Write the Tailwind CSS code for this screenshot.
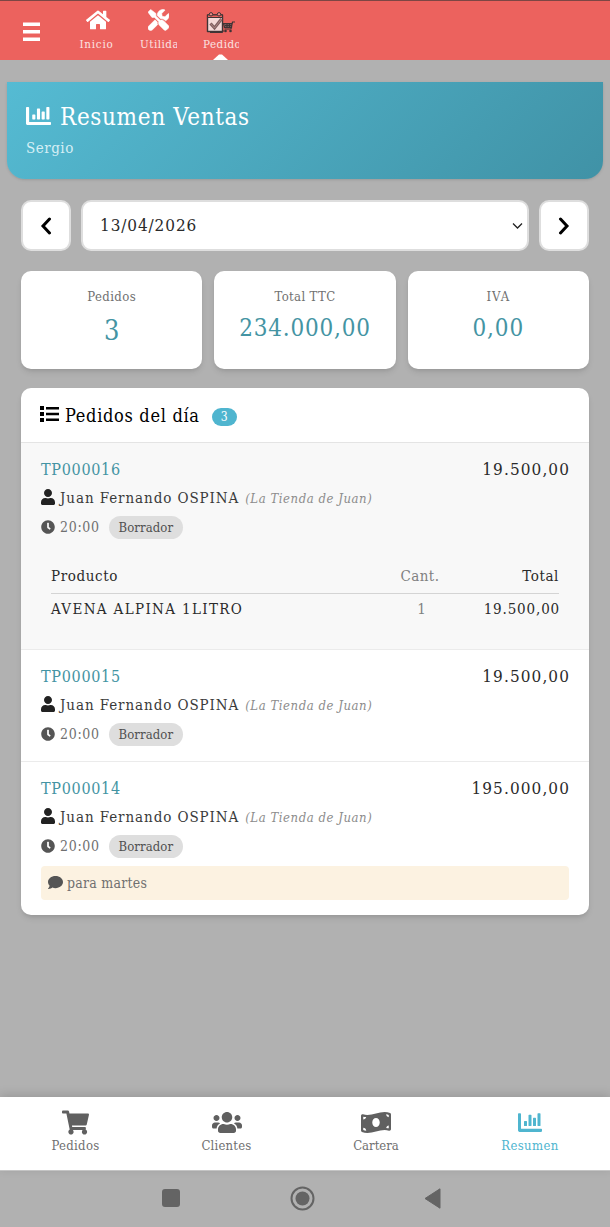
<!DOCTYPE html>
<html lang="es">
<head>
    <meta charset="UTF-8">
    <meta name="viewport" content="width=device-width, initial-scale=1.0">
    <title>Resumen Ventas</title>
    <!-- Tailwind CSS CDN for styling -->
    <script src="https://cdn.jsdelivr.net/npm/@tailwindcss/browser@4"></script>
</head>
<body class="bg-[#b1b1b1] font-['DejaVu_Serif_Condensed','DejaVu_Serif',serif] text-[#2a2a2a]">
    <!-- Shared icon shapes -->
    <svg class="hidden" xmlns="http://www.w3.org/2000/svg">
        <symbol id="chart" viewBox="0 0 512 512" preserveAspectRatio="none"><path d="M332.8 330h38.4c6.4 0 12.8-6.4 12.8-12.8V172.8c0-6.4-6.4-12.8-12.8-12.8h-38.4c-6.4 0-12.8 6.4-12.8 12.8v144.4c0 6.4 6.4 12.8 12.8 12.8zm96 0h38.4c6.4 0 12.8-6.4 12.8-12.8V76.8c0-6.4-6.4-12.8-12.8-12.8h-38.4c-6.4 0-12.8 6.4-12.8 12.8v240.4c0 6.4 6.4 12.8 12.8 12.8zm-288 0h38.4c6.4 0 12.8-6.4 12.8-12.8v-80.4c0-6.4-6.4-12.8-12.8-12.8h-38.4c-6.4 0-12.8 6.4-12.8 12.8v80.4c0 6.4 6.4 12.8 12.8 12.8zm96 0h38.4c6.4 0 12.8-6.4 12.8-12.8V108.8c0-6.4-6.4-12.8-12.8-12.8h-38.4c-6.4 0-12.8 6.4-12.8 12.8v208.400c0 6.4 6.4 12.8 12.8 12.8zM496 384H64V80c0-8.84-7.16-16-16-16H16C7.16 64 0 71.16 0 80v336c0 17.67 14.33 32 32 32h464c8.84 0 16-7.16 16-16v-32c0-8.84-7.16-16-16-16z"/></symbol>
        <symbol id="user" viewBox="0 0 448 512"><path d="M224 256c70.7 0 128-57.3 128-128S294.7 0 224 0 96 57.3 96 128s57.3 128 128 128zm89.6 32h-16.7c-22.2 10.2-46.9 16-72.9 16s-50.6-5.8-72.9-16h-16.7C60.2 288 0 348.2 0 422.4V464c0 26.5 21.5 48 48 48h352c26.5 0 48-21.5 48-48v-41.6c0-74.2-60.2-134.4-134.4-134.4z"/></symbol>
        <symbol id="clock" viewBox="0 0 512 512"><path d="M256,8C119,8,8,119,8,256S119,504,256,504,504,393,504,256,393,8,256,8Zm92.49,313h0l-20,25a16,16,0,0,1-22.49,2.5h0l-67-49.72a40,40,0,0,1-15-31.23V112a16,16,0,0,1,16-16h32a16,16,0,0,1,16,16V256l58,42.5A16,16,0,0,1,348.49,321Z"/></symbol>
    </svg>

    <div class="flex h-[1227px] w-[610px] flex-col overflow-hidden">
        <!-- Top bar -->
        <header class="flex h-[60px] shrink-0 border-t border-[#7d4644] bg-[#ec625e] text-[11.5px] leading-4 tracking-[0.5px] text-[#fbe3e2]">
            <div class="w-[77px] pt-[21px] pl-[23px]">
                <svg class="h-[20px] w-[17px] fill-white" viewBox="0 0 17 20"><path d="M0 .5h17V4H0zM0 8h17v3.5H0zM0 15.500h17V19H0z"/></svg>
            </div>
            <div class="flex w-[41px] flex-col items-center pt-2">
                <svg class="h-[22px] w-[24px] fill-white" viewBox="0 0 576 512"><path d="M280.37 148.26L96 300.11V464a16 16 0 0 0 16 16l112.06-.29a16 16 0 0 0 15.92-16V368a16 16 0 0 1 16-16h64a16 16 0 0 1 16 16v95.64a16 16 0 0 0 16 16.050L464 480a16 16 0 0 0 16-16V300L295.67 148.26a12.19 12.19 0 0 0-15.3 0zM571.6 251.47L488 182.56V44.050a12 12 0 0 0-12-12h-56a12 12 0 0 0-12 12v72.61L318.47 43a48 48 0 0 0-61 0L4.340 251.47a12 12 0 0 0-1.6 16.9l25.5 31A12 12 0 0 0 45.150 301l235.22-193.74a12.19 12.19 0 0 1 15.3 0L530.9 301a12 12 0 0 0 16.9-1.6l25.5-31a12 12 0 0 0-1.7-16.930z"/></svg>
                <span class="mt-[5px] mr-[2px] tracking-[0.8px]">Inicio</span>
            </div>
            <div class="ml-[22px] flex w-[37px] flex-col pt-2">
                <svg class="ml-[8px] h-[22px] w-[21px] fill-white" viewBox="0 0 512 512"><path d="M501.1 395.7L384 278.6c-23.1-23.1-57.6-27.6-85.4-13.9L192 158.1V96L64 0 0 64l96 128h62.1l106.6 106.6c-13.6 27.8-9.2 62.3 13.9 85.4l117.1 117.1c14.6 14.6 38.2 14.6 52.7 0l52.7-52.7c14.5-14.6 14.5-38.2 0-52.7zM331.7 225c28.3 0 54.9 11 74.9 31l19.4 19.4c15.8-6.9 30.8-16.5 43.8-29.5 37.1-37.1 49.7-89.3 37.9-136.7-2.2-9-13.5-12.1-20.1-5.5l-74.4 74.4-67.9-11.3L334 98.9l74.4-74.4c6.6-6.6 3.4-17.9-5.7-20.2-47.4-11.7-99.6.9-136.6 37.9-28.5 28.5-41.9 66.1-41.2 103.6l82.1 82.1c8.1-1.9 16.5-2.9 24.7-2.9zm-103.900 82l-56.700-56.700L18.700 402.800c-25 25-25 65.500 0 90.500s65.500 25 90.500 0l123.600-123.600c-7.600-19.900-9.900-41.600-5-62.700z" stroke="#fff" stroke-width="14"/></svg>
                <span class="mt-[5px] overflow-hidden whitespace-nowrap">Utilidades</span>
            </div>
            <div class="ml-[26px] flex w-[36px] flex-col pt-[11px]">
                <svg class="ml-[3px] h-[22px] w-[30px]" viewBox="0 0 30 22" fill="none">
                    <path d="M1.500 3h15v16.500h-15z" fill="#f4d8d7" stroke="#3f3435" stroke-width="1.400" stroke-linejoin="round"/>
                    <path d="M1.500 5.500V3h15v2.500z" fill="#ec625e" stroke="#3f3435"/>
                    <path d="M4 20.500h12.500l1-2" stroke="#3f3435"/>
                    <circle cx="5" cy="2.300" r="1.700" fill="#ec8a87" stroke="#3f3435"/>
                    <circle cx="13" cy="2.300" r="1.700" fill="#ec8a87" stroke="#3f3435"/>
                    <path d="M4.500 11.500l4 4.500L15.500 7" stroke="#7e5f60" stroke-width="3"/>
                    <path d="M4.500 11.500l4 4.500L15.500 7" stroke="#b08382" stroke-width="1"/>
                    <path d="M18 11.500h8l-1 4.500h-6z" fill="#7a5a5b"/>
                    <path d="M29 10h-2.500l-1.500 7h-6.500M26 11.500h-8.500l1 4h7zM19 13.500h6.500M21 11.500v4M23.500 11.500v4" stroke="#3f3435" stroke-width="1.200"/>
                    <circle cx="19.500" cy="19" r="1.300" fill="#3f3435"/><circle cx="24.500" cy="19" r="1.300" fill="#3f3435"/>
                </svg>
                <span class="mt-[2px] overflow-hidden whitespace-nowrap">Pedidos</span>
                <svg class="mt-[2px] ml-[10px] h-[6px] w-[15px] fill-white" viewBox="0 0 15 6"><path d="M0 6L6 .5h3L15 6z"/></svg>
            </div>
        </header>

        <!-- Title banner -->
        <section class="mx-[7px] mt-[22px] h-[97px] shrink-0 rounded-b-[18px] bg-linear-135 from-[#55bbd3] to-[#4092a6] px-5 pt-[19px] text-white shadow-sm">
            <h1 class="flex h-8 items-center text-[24px] tracking-[0.65px]">
                <svg class="mb-[3px] mr-[9px] ml-[-1px] h-[24px] w-[25px] fill-white"><use href="#chart"/></svg>Resumen Ventas
            </h1>
            <p class="mt-[5px] ml-[-1px] text-[15px] leading-5 tracking-[0.5px] text-[#d5eff5]">Sergio</p>
        </section>

        <!-- Date picker -->
        <div class="mx-[21px] mt-[21px] flex h-[51px] shrink-0 gap-[10px]">
            <div class="flex w-[50px] items-center justify-center rounded-[10px] border-2 border-[#dedede] bg-white">
                <svg class="h-[18px] w-[12px]" viewBox="0 0 12 18" fill="none"><path d="M9.500 2L3 9l6.500 7" stroke="#000" stroke-width="3" stroke-linecap="round"/></svg>
            </div>
            <div class="flex flex-1 items-center justify-between rounded-[10px] border-2 border-[#dedede] bg-white pr-1 pl-[17px] text-[17px]">
                <span class="tracking-[0.9px]">13/04/2026</span>
                <svg class="h-[8px] w-[11px]" viewBox="0 0 11 8" fill="none"><path d="M1 1.500l4.500 4.500L10 1.500" stroke="#222" stroke-width="1.300"/></svg>
            </div>
            <div class="flex w-[50px] items-center justify-center rounded-[10px] border-2 border-[#dedede] bg-white">
                <svg class="h-[18px] w-[12px]" viewBox="0 0 12 18" fill="none"><path d="M2.500 2L9 9l-6.500 7" stroke="#000" stroke-width="3" stroke-linecap="round"/></svg>
            </div>
        </div>

        <!-- Totals -->
        <div class="mx-[21px] mt-[20px] grid h-[98px] shrink-0 grid-cols-3 gap-[12px] text-center">
            <div class="rounded-[10px] bg-white pt-4 shadow-md">
                <p class="text-[13px] leading-5 tracking-[0.4px] text-[#707070]">Pedidos</p>
                <p class="mt-[6px] text-[27px] leading-9 text-[#4494a3]">3</p>
            </div>
            <div class="rounded-[10px] bg-white pt-4 shadow-md">
                <p class="text-[13px] leading-5 tracking-[0.35px] text-[#707070]">Total TTC</p>
                <p class="mt-[3px] text-[24px] leading-9 tracking-[0.8px] text-[#4494a3]">234.000,00</p>
            </div>
            <div class="rounded-[10px] bg-white pt-4 shadow-md">
                <p class="text-[13px] leading-5 tracking-[1px] text-[#707070]">IVA</p>
                <p class="mt-[3px] text-[24px] leading-9 tracking-[0.9px] text-[#4494a3]">0,00</p>
            </div>
        </div>

        <!-- Orders of the day -->
        <section class="mx-[21px] mt-[19px] h-[527px] shrink-0 overflow-hidden rounded-[10px] bg-white shadow-md">
            <div class="flex h-[55px] items-center border-b border-[#e4e4e4] pl-[19px] text-[18px] text-black">
                <svg class="mb-[3px] mr-[6px] h-[16px] w-[19px]" viewBox="0 0 19 16"><path d="M0 0h4v4H0zM0 6h4v4H0zM0 12h4v4H0zM6 1h13v2.400H6zM6 6.800h13v2.400H6zM6 12.600h13V15H6z"/></svg>
                <h2 class="tracking-[0.7px]">Pedidos del día</h2>
                <span class="mt-[3px] ml-[12px] flex h-[18px] w-[25px] items-center justify-center rounded-full bg-[#4fb5cf] text-[12px] text-white">3</span>
            </div>

            <article class="h-[207px] border-b border-[#ebebeb] bg-[#f8f8f8] px-5 pt-[13px]">
                <div class="flex h-7 items-center justify-between text-[16px]"><span class="tracking-[0.7px] text-[#4494a3]">TP000016</span><span class="mr-[-1px] text-[17px] tracking-[1.1px]">19.500,00</span></div>
                <div class="flex h-7 items-center text-[15px]"><svg class="mr-[5px] mb-[2px] h-[16px] w-[14px] fill-[#222]"><use href="#user"/></svg><span class="tracking-[0.92px] text-[#3a3a3a]">Juan Fernando OSPINA</span><i class="mt-px ml-[6px] text-[13px] tracking-[0.55px] text-[#8c8c8c]">(La Tienda de Juan)</i></div>
                <div class="flex h-[31px] items-center text-[14px] text-[#707070]"><svg class="mr-[5px] mb-[2px] h-[14px] w-[14px] fill-[#555]"><use href="#clock"/></svg><span class="tracking-[0.7px]">20:00</span><span class="ml-[9px] flex h-[23px] w-[74px] items-center justify-center rounded-full bg-[#dedede] text-[13px] tracking-[0.1px] text-[#505050]">Borrador</span></div>
                <div class="mx-[10px] mt-[17px] text-[15px]">
                    <div class="flex h-[34px] items-center border-b border-[#d4d4d4]"><span class="flex-1 tracking-[0.6px]">Producto</span><span class="w-[60px] text-center tracking-[0.4px] text-[#808080]">Cant.</span><span class="w-[109px] text-right tracking-[0.6px]">Total</span></div>
                    <div class="flex h-[30px] items-center"><span class="flex-1 tracking-[1.35px]">AVENA ALPINA 1LITRO</span><span class="w-[60px] pl-[3px] text-center text-[#808080]">1</span><span class="mr-[-1px] w-[110px] text-right tracking-[0.85px]">19.500,00</span></div>
                </div>
            </article>

            <article class="h-[112px] border-b border-[#ebebeb] px-5 pt-[13px]">
                <div class="flex h-7 items-center justify-between text-[16px]"><span class="tracking-[0.7px] text-[#4494a3]">TP000015</span><span class="mr-[-1px] text-[17px] tracking-[1.1px]">19.500,00</span></div>
                <div class="flex h-7 items-center text-[15px]"><svg class="mr-[5px] mb-[2px] h-[16px] w-[14px] fill-[#222]"><use href="#user"/></svg><span class="tracking-[0.92px] text-[#3a3a3a]">Juan Fernando OSPINA</span><i class="mt-px ml-[6px] text-[13px] tracking-[0.55px] text-[#8c8c8c]">(La Tienda de Juan)</i></div>
                <div class="flex h-[31px] items-center text-[14px] text-[#707070]"><svg class="mr-[5px] mb-[2px] h-[14px] w-[14px] fill-[#555]"><use href="#clock"/></svg><span class="tracking-[0.7px]">20:00</span><span class="ml-[9px] flex h-[23px] w-[74px] items-center justify-center rounded-full bg-[#dedede] text-[13px] tracking-[0.1px] text-[#505050]">Borrador</span></div>
            </article>

            <article class="px-5 pt-[13px]">
                <div class="flex h-7 items-center justify-between text-[16px]"><span class="tracking-[0.7px] text-[#4494a3]">TP000014</span><span class="mr-[-1px] text-[17px] tracking-[1.1px]">195.000,00</span></div>
                <div class="flex h-7 items-center text-[15px]"><svg class="mr-[5px] mb-[2px] h-[16px] w-[14px] fill-[#222]"><use href="#user"/></svg><span class="tracking-[0.92px] text-[#3a3a3a]">Juan Fernando OSPINA</span><i class="mt-px ml-[6px] text-[13px] tracking-[0.55px] text-[#8c8c8c]">(La Tienda de Juan)</i></div>
                <div class="flex h-[31px] items-center text-[14px] text-[#707070]"><svg class="mr-[5px] mb-[2px] h-[14px] w-[14px] fill-[#555]"><use href="#clock"/></svg><span class="tracking-[0.7px]">20:00</span><span class="ml-[9px] flex h-[23px] w-[74px] items-center justify-center rounded-full bg-[#dedede] text-[13px] tracking-[0.1px] text-[#505050]">Borrador</span></div>
                <div class="mt-1 flex h-[34px] items-center rounded-[4px] bg-[#fcf2e1] pl-[7px] text-[14px] tracking-[0.25px] text-[#707070]">
                    <svg class="mr-[4px] mb-[2px] h-[15px] w-[15px] fill-[#555]" viewBox="0 0 512 512"><path d="M256 32C114.6 32 0 125.1 0 240c0 49.6 21.4 95 57 130.7C44.5 421.1 2.7 466 2.2 466.5c-2.2 2.3-2.8 5.7-1.5 8.7S4.8 480 8 480c66.3 0 116-31.8 140.6-51.4 32.7 12.3 69 19.4 107.4 19.4 141.4 0 256-93.1 256-208S397.4 32 256 32z"/></svg>para martes
                </div>
            </article>
        </section>

        <!-- Bottom navigation -->
        <nav class="mt-auto flex h-[73px] shrink-0 bg-white pt-[13px] text-[13px] leading-[22px] tracking-[0.3px] text-[#707070] shadow-[0_-2px_10px_rgba(0,0,0,0.15)]">
            <div class="flex w-[151px] flex-col items-center">
                <svg class="h-[25px] w-[27px] fill-[#606060]" viewBox="0 0 576 512"><path d="M528.12 301.319l47.273-208C578.806 78.301 567.391 64 551.99 64H159.208l-9.166-44.810C147.758 8.021 137.93 0 126.529 0H24C10.745 0 0 10.745 0 24v16c0 13.255 10.745 24 24 24h69.883l70.248 343.435C147.325 417.1 136 435.222 136 456c0 30.928 25.072 56 56 56s56-25.072 56-56c0-15.674-6.447-29.835-16.824-40h209.647C430.447 426.165 424 440.326 424 456c0 30.928 25.072 56 56 56s56-25.072 56-56c0-22.172-12.888-41.332-31.579-50.405l5.517-24.276c3.413-15.018-8.002-29.319-23.403-29.319H218.117l-6.545-32h293.145c11.206 0 20.92-7.754 23.403-18.681z"/></svg>
                <span>Pedidos</span>
            </div>
            <div class="flex w-[151px] flex-col items-center">
                <svg class="h-[25px] w-[30px] fill-[#606060]" viewBox="0 0 640 512"><path d="M96 224c35.3 0 64-28.7 64-64s-28.7-64-64-64-64 28.7-64 64 28.7 64 64 64zm448 0c35.3 0 64-28.7 64-64s-28.7-64-64-64-64 28.7-64 64 28.7 64 64 64zm32 32h-64c-17.6 0-33.5 7.1-45.1 18.6 40.3 22.1 68.9 62 75.1 109.4h66c17.7 0 32-14.3 32-32v-32c0-35.3-28.7-64-64-64zm-256 0c61.9 0 112-50.1 112-112S381.9 32 320 32 208 82.1 208 144s50.1 112 112 112zm76.8 32h-8.3c-20.8 10-43.9 16-68.5 16s-47.6-6-68.5-16h-8.3C179.6 288 128 339.6 128 403.2V432c0 26.5 21.5 48 48 48h288c26.5 0 48-21.5 48-48v-28.8c0-63.6-51.6-115.2-115.2-115.2zm-223.7-13.4C161.5 263.1 145.6 256 128 256H64c-35.3 0-64 28.7-64 64v32c0 17.7 14.3 32 32 32h65.9c6.3-47.4 34.9-87.3 75.2-109.4z"/></svg>
                <span class="tracking-[0.2px]">Clientes</span>
            </div>
            <div class="flex w-[148px] flex-col items-center">
                <svg class="h-[25px] w-[30px] fill-[#606060]" viewBox="0 0 640 512"><path d="M621.16 54.46C582.37 38.19 543.55 32 504.75 32c-123.17-.01-246.33 62.34-369.5 62.34-30.89 0-61.76-3.92-92.65-13.72-3.47-1.1-6.95-1.62-10.35-1.62C15.04 79 0 92.32 0 110.81v317.26c0 12.63 7.23 24.6 18.84 29.46C57.63 473.81 96.45 480 135.25 480c123.17 0 246.34-62.35 369.51-62.35 30.89 0 61.76 3.92 92.65 13.72 3.47 1.1 6.95 1.62 10.35 1.62 17.21 0 32.25-13.32 32.25-31.81V83.93c-.01-12.64-7.24-24.6-18.85-29.47zM48 132.22c20.12 5.04 41.12 7.57 62.72 8.93C104.84 170.54 79 192.69 48 192.69v-60.47zm0 285v-47.78c34.37 0 62.18 27.27 63.71 61.4-22.53-1.81-43.59-6.31-63.71-13.62zM320 352c-44.19 0-80-42.99-80-96 0-53.02 35.82-96 80-96s80 42.98 80 96c0 53.03-35.83 96-80 96zm272 27.78c-17.52-4.39-35.71-6.85-54.32-8.44 5.87-26.08 27.5-45.88 54.32-49.28v57.72zm0-236.11c-30.89-3.91-54.86-29.7-55.81-61.55 19.54 2.17 38.09 6.23 55.81 12.66v48.89z"/></svg>
                <span class="tracking-normal">Cartera</span>
            </div>
            <div class="flex w-[160px] flex-col items-center text-[#4fb5cf]">
                <svg class="h-[25px] w-[24px] fill-[#4fb5cf]"><use href="#chart"/></svg>
                <span class="tracking-[0.4px]">Resumen</span>
            </div>
        </nav>

        <!-- Android system buttons -->
        <div class="flex h-[57px] shrink-0 items-center border-t border-[#c4c4c4] pb-[2px] pl-[162px]">
            <div class="h-[18px] w-[18px] rounded-[3px] bg-[#646464]"></div>
            <svg class="ml-[110px] h-[25px] w-[25px]" viewBox="0 0 25 25" fill="none"><circle cx="12.500" cy="12.500" r="11" stroke="#646464" stroke-width="2"/><circle cx="12.500" cy="12.500" r="7" fill="#646464"/></svg>
            <svg class="ml-[109px] h-[21px] w-[18px] fill-[#646464]" viewBox="0 0 18 21"><path d="M16 .8v19.400L1 10.500z" stroke="#646464" stroke-linejoin="round"/></svg>
        </div>
    </div>
</body>
</html>
